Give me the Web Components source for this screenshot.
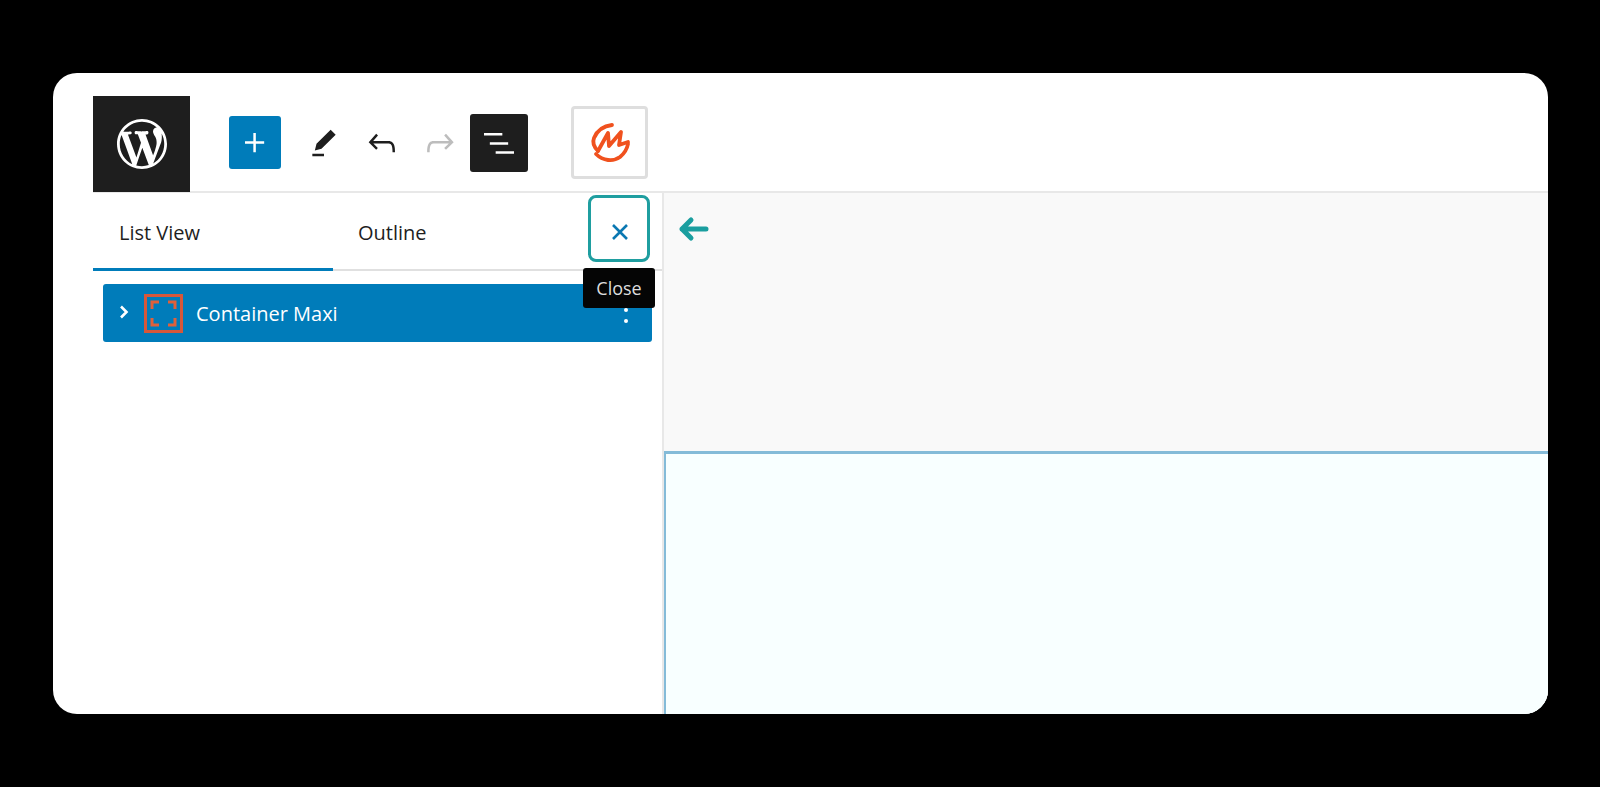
<!DOCTYPE html>
<html lang="en">
<head>
<meta charset="utf-8">
<title>List View</title>
<style>
  html, body { margin: 0; height: 100%; background: #000; overflow: hidden; }
  body { font-family: "Open Sans", "Noto Sans", sans-serif; padding: 73px 52px 0 53px; box-sizing: border-box; }
</style>
</head>
<body>
<editor-card>
  <editor-toolbar slot="top"></editor-toolbar>
  <list-panel slot="side"></list-panel>
  <editor-canvas slot="main"></editor-canvas>
</editor-card>

<script>
// Outer rounded card
class EditorCard extends HTMLElement {
  constructor() {
    super();
    this.attachShadow({ mode: 'open' });
    this.shadowRoot.innerHTML = `
      <style>
        :host {
          display: flex;
          flex-direction: column;
          height: 641px;
          padding-left: 40px;
          background: #fff;
          border-radius: 24px;
          overflow: hidden;
        }
        .body { display: flex; flex: 1; min-height: 0; }
      </style>
      <slot name="top"></slot>
      <div class="body">
        <slot name="side"></slot>
        <slot name="main"></slot>
      </div>
    `;
  }
}

// Top bar with the logo and tools
class EditorToolbar extends HTMLElement {
  constructor() {
    super();
    this.attachShadow({ mode: 'open' });
    this.shadowRoot.innerHTML = `
      <style>
        :host {
          display: flex;
          align-items: flex-end;
          height: 118px;
          border-bottom: 2px solid #e8e8e8;
          box-sizing: content-box;
        }
        .wp {
          width: 97px; height: 96px;
          background: #1e1e1e;
          display: flex; align-items: center; justify-content: center;
          margin-bottom: -1px;
        }
        .tools { display: flex; align-items: center; height: 96px; padding-bottom: 1px; box-sizing: border-box; }
        .add {
          width: 52px; height: 53px; margin-left: 39px; margin-right: 14px;
          background: #007cba; border-radius: 3px;
          display: flex; align-items: center; justify-content: center;
        }
        .tool { width: 58px; height: 58px; display: flex; align-items: center; justify-content: center; }
        .list { background: #1e1e1e; border-radius: 3px; margin-left: 1px; }
        .logo {
          width: 71px; height: 67px; margin-left: 43px;
          border: 3px solid #dedede; border-radius: 4px;
          display: flex; align-items: center; justify-content: center;
        }
        svg { display: block; }
      </style>
      <div class="wp">
        <svg width="50" height="50" viewBox="0 0 20 20" fill="#fff"><path d="M20 10c0-5.51-4.49-10-10-10C4.48 0 0 4.49 0 10c0 5.52 4.48 10 10 10 5.51 0 10-4.48 10-10zM7.78 15.37L4.37 6.22c.55-.02 1.17-.08 1.17-.08.5-.06.44-1.13-.06-1.11 0 0-1.45.11-2.37.11-.18 0-.37 0-.58-.01C4.12 2.69 6.87 1.11 10 1.11c2.33 0 4.45.87 6.05 2.34-.68-.11-1.65.39-1.65 1.58 0 .74.45 1.36.9 2.1.35.61.55 1.36.55 2.46 0 1.49-1.4 5-1.4 5l-3.03-8.37c.54-.02.82-.17.82-.17.5-.05.44-1.25-.06-1.22 0 0-1.44.12-2.38.12-.87 0-2.33-.12-2.33-.12-.5-.03-.56 1.2-.06 1.22l.92.08 1.26 3.41zM17.41 10c.24-.64.74-1.87.43-4.25.7 1.29 1.05 2.71 1.05 4.25 0 3.29-1.73 6.24-4.4 7.78.97-2.59 1.94-5.2 2.92-7.78zM6.1 18.09C3.12 16.65 1.11 13.53 1.11 10c0-1.3.23-2.48.72-3.59C3.25 10.3 4.67 14.2 6.1 18.09zm4.03-6.63l2.58 6.98c-.86.29-1.76.45-2.71.45-.79 0-1.57-.11-2.29-.33.81-2.38 1.62-4.74 2.42-7.1z"/></svg>
      </div>
      <div class="tools">
        <div class="add">
          <svg width="40" height="40" viewBox="0 0 24 24" fill="#fff"><path d="M11 12.5V17.5H12.5V12.5H17.5V11H12.5V6H11V11H6V12.5H11Z"/></svg>
        </div>
        <div class="tool">
          <svg width="40" height="40" viewBox="0 0 24 24" fill="#1e1e1e"><path d="m19 7-3-3-8.5 8.5-1 4 4-1L19 7Zm-7 11.5H5V20h7v-1.5Z"/></svg>
        </div>
        <div class="tool">
          <svg width="40" height="40" viewBox="0 0 24 24" fill="#1e1e1e"><path d="M18.3 11.7c-.6-.6-1.4-.9-2.3-.9H6.7l2.9-3.3-1.1-1-4.5 5L8.5 16l1-1-2.7-2.7H16c.5 0 .9.2 1.3.5 1 1 1 3.4 1 4.5v.3h1.5v-.2c0-1.5 0-4.3-1.5-5.7z"/></svg>
        </div>
        <div class="tool">
          <svg width="40" height="40" viewBox="0 0 24 24" fill="#bdbdbd"><path d="M15.6 6.5l-1.1 1 2.9 3.3H8c-.9 0-1.7.3-2.3.9-1.4 1.5-1.4 4.2-1.4 5.7v.2h1.5v-.3c0-1.1 0-3.5 1-4.5.3-.3.7-.5 1.3-.5h9.2L14.5 15l1.1 1.1 4.6-4.6-4.6-5z"/></svg>
        </div>
        <div class="tool list">
          <svg width="40" height="40" viewBox="0 0 24 24" fill="#fff"><path d="M3 6h11v1.5H3V6Zm3.5 5.5h11V13h-11v-1.5ZM10 17h11v1.5H10V17Z"/></svg>
        </div>
        <div class="logo">
          <svg width="50" height="48" viewBox="0 0 50 48" fill="none" stroke="#f0511e" stroke-width="3.8" stroke-linecap="round" stroke-linejoin="round">
            <path d="M27 6C18 7 12 12 9 19C7 24 9 28 13 32"/>
            <path d="M13 32 23 14 24 27 36 13 34 26 43 23"/>
            <path d="M11 35C18 42 28 43 35 38C40 34 42 30 43 25"/>
          </svg>
        </div>
      </div>
    `;
  }
}

// Left panel with the tabs and tree
class ListPanel extends HTMLElement {
  constructor() {
    super();
    this.attachShadow({ mode: 'open' });
    this.shadowRoot.innerHTML = `
      <style>
        :host {
          display: block;
          width: 569px;
          border-right: 2px solid #e8e8e8;
          position: relative;
          font-size: 20px;
          color: #1e1e1e;
        }
        .tabs {
          display: flex;
          height: 76px;
          border-bottom: 2px solid #e0e0e0;
          box-sizing: content-box;
        }
        .tab { width: 240px; padding-left: 26px; box-sizing: border-box; line-height: 80px; height: 78px; }
        .tab.on { border-bottom: 3px solid #007cba; }
        .tab + .tab { padding-left: 25px; width: 255px; }
        .close {
          width: 62px; height: 67px; margin-top: 2px;
          box-sizing: border-box;
          border: 3px solid #1f9ea0; border-radius: 8px;
          display: flex; align-items: center; justify-content: center;
          background: #fff;
        }
        .close svg { margin: 6px 0 0 1px; }
        .tip {
          position: absolute; left: 490px; top: 75px;
          width: 72px; height: 40px;
          background: #050505; color: #ddd; border-radius: 3px;
          font-size: 18px; line-height: 40px; text-align: center;
          z-index: 2;
        }
        .row {
          margin: 13px 10px 0;
          height: 58px;
          background: #007cba;
          border-radius: 3px;
          color: #fff;
          display: flex; align-items: center;
          position: relative;
        }
        .chev { width: 41px; display: flex; justify-content: center; margin-top: -2px; }
        .block {
          width: 39px; height: 39px; box-sizing: border-box;
          border: 3px solid #d6573a;
          display: flex; align-items: center; justify-content: center;
          margin-right: 13px;
        }
        .dots { position: absolute; right: 24px; top: 24px; }
        svg { display: block; }
      </style>
      <div class="tabs">
        <div class="tab on">List View</div>
        <div class="tab">Outline</div>
        <div class="close">
          <svg width="18" height="18" viewBox="0 0 18 18" fill="none" stroke="#0a78b2" stroke-width="2.6"><path d="M2 2 16 16M16 2 2 16"/></svg>
        </div>
      </div>
      <div class="tip">Close</div>
      <div class="row">
        <div class="chev">
          <svg width="10" height="14" viewBox="0 0 10 14" fill="none" stroke="#fff" stroke-width="2.6"><path d="M2 1.5 7.5 7 2 12.5"/></svg>
        </div>
        <div class="block">
          <svg width="27" height="27" viewBox="0 0 27 27" fill="none" stroke="#e0603a" stroke-width="3"><path d="M2 9V2h7M18 2h7v7M25 18v7h-7M9 25H2v-7"/></svg>
        </div>
        <span>Container Maxi</span>
        <svg class="dots" width="4" height="16" viewBox="0 0 4 16" fill="#fff"><circle cx="2" cy="2" r="2"/><circle cx="2" cy="13" r="2"/></svg>
      </div>
    `;
  }
}

// Grey canvas area with the arrow and container block
class EditorCanvas extends HTMLElement {
  constructor() {
    super();
    this.attachShadow({ mode: 'open' });
    this.shadowRoot.innerHTML = `
      <style>
        :host {
          display: flex;
          flex-direction: column;
          flex: 1;
          min-width: 0;
          background: #f9f9f9;
        }
        .top { height: 258px; padding: 21px 0 0 14px; box-sizing: border-box; }
        .block {
          flex: 1;
          margin-left: -1px;
          background: #f8ffff;
          border-top: 3px solid #84bbd8;
          border-left: 3px solid #84bbd8;
        }
        svg { display: block; }
      </style>
      <div class="top">
        <svg width="32" height="30" viewBox="0 0 32 30" fill="none" stroke="#1a9e9f" stroke-width="5" stroke-linecap="round" stroke-linejoin="round"><path d="M28 15H4M13 6 4 15l9 9"/></svg>
      </div>
      <div class="block"></div>
    `;
  }
}

customElements.define('editor-card', EditorCard);
customElements.define('editor-toolbar', EditorToolbar);
customElements.define('list-panel', ListPanel);
customElements.define('editor-canvas', EditorCanvas);
</script>
</body>
</html>
